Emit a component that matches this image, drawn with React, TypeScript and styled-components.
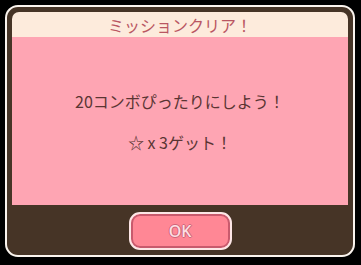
import styled, { createGlobalStyle } from "styled-components";

const Global = createGlobalStyle`
  html, body {
    margin: 0;
    padding: 0;
    background: #000;
  }
  body {
    font-family: "Noto Sans CJK JP", "Noto Sans", sans-serif;
  }
`;

const Screen = styled.div`
  width: 361px;
  height: 265px;
  padding: 5px;
  box-sizing: border-box;
`;

const Frame = styled.div`
  width: 350px;
  height: 252px;
  box-sizing: border-box;
  border: 2px solid #fbf4ee;
  border-radius: 13px;
  background: #463426;
  padding: 5px 5px 0;
  display: flex;
  flex-direction: column;
`;

const Header = styled.div`
  height: 25px;
  background: #fdebdc;
  border-radius: 7px 7px 0 0;
  display: flex;
  align-items: center;
  justify-content: center;
  color: #b95662;
  font-size: 16px;
  line-height: 1;
`;

const Body = styled.div`
  height: 168px;
  background: #fea5b3;
  display: flex;
  flex-direction: column;
  align-items: center;
  justify-content: center;
  gap: 25px;
  color: #5a3533;
  font-size: 16px;
  line-height: 16px;
`;

const Line = styled.div`
  white-space: nowrap;
`;

const Footer = styled.div`
  flex: 1;
  display: flex;
  justify-content: center;
  padding-top: 7px;
`;

const OkButton = styled.button`
  width: 103px;
  height: 38px;
  box-sizing: border-box;
  border: 2px solid #fde6e6;
  border-radius: 11px;
  background: #ff8795;
  box-shadow: inset 0 0 0 2px #c85a6d;
  font-family: "Noto Sans", sans-serif;
  font-size: 16px;
  font-weight: 500;
  color: #fde0e5;
  text-shadow: 1px 0 0 #cf6679, -1px 0 0 #cf6679, 0 1px 0 #cf6679, 0 -1px 0 #cf6679;
  padding: 0;
  cursor: pointer;
`;

export default function App() {
  return (
    <Screen>
      <Global />
      <Frame>
        <Header>ミッションクリア！</Header>
        <Body>
          <Line>20コンボぴったりにしよう！</Line>
          <Line>☆ x 3ゲット！</Line>
        </Body>
        <Footer>
          <OkButton>OK</OkButton>
        </Footer>
      </Frame>
    </Screen>
  );
}
